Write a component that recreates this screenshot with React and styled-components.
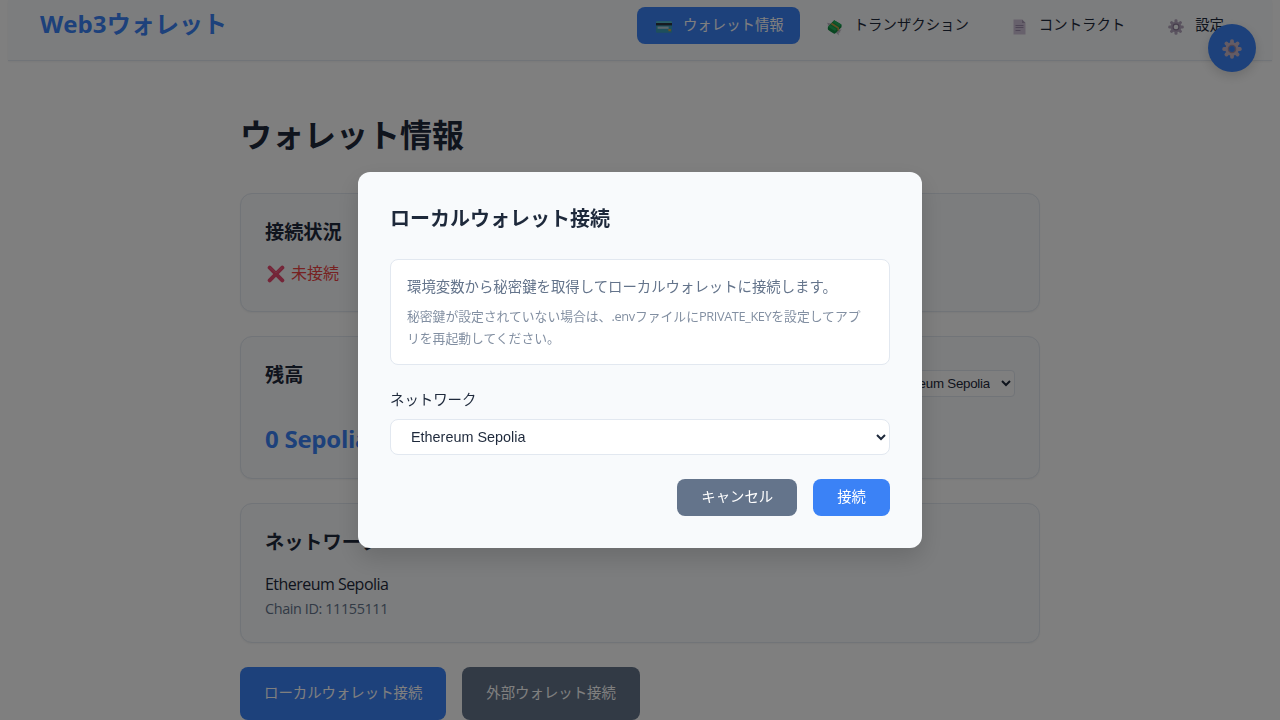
import React from "react";
import styled, { createGlobalStyle } from "styled-components";

const GlobalStyle = createGlobalStyle`
  * { box-sizing: border-box; }
  html, body { margin: 0; height: 720px; overflow: hidden; background: #fff; }
  body {
    font-family: "Open Sans", "Noto Sans CJK JP", sans-serif;
    font-size: 16px;
    color: #1e293b;
  }
  button { font-family: inherit; cursor: pointer; }
`;

const Page = styled.div`
  height: 720px;
  padding: 0 8px;
  overflow: hidden;
`;

const Header = styled.header`
  display: flex;
  justify-content: space-between;
  align-items: flex-start;
  height: 61px;
  padding: 7px 32px 0;
  background: #f8fafc;
  border-bottom: 1px solid #e2e8f0;
  box-shadow: 0 1px 2px rgba(0, 0, 0, 0.05);
`;

const Brand = styled.div`
  font-size: 24px;
  font-weight: 700;
  line-height: 34px;
  letter-spacing: 0.1px;
  color: #3b82f6;
  white-space: nowrap;
`;

const Nav = styled.nav`
  display: flex;
  gap: 8px;
`;

const NavItem = styled.button`
  display: flex;
  align-items: center;
  gap: 8px;
  height: 37px;
  padding: 0 16px;
  border: 0;
  border-radius: 8px;
  background: ${(p) => (p.$active ? "#3b82f6" : "transparent")};
  color: ${(p) => (p.$active ? "#fff" : "#1e293b")};
  font-size: 14.4px;
  line-height: 20px;
  white-space: nowrap;
`;

const NavIcon = styled.span`
  display: flex;
  justify-content: center;
  width: 22px;
  padding-top: 3px;
`;

const NavLabel = styled.span`
  padding-bottom: 1px;
`;

const Main = styled.main`
  width: 800px;
  margin: 0 auto;
  padding-top: 50px;
`;

const PageTitle = styled.h1`
  margin: 0 0 34px;
  font-size: 32px;
  font-weight: 700;
  line-height: 48px;
`;

const Card = styled.section`
  height: ${(p) => p.$height}px;
  margin-bottom: 24px;
  padding: 23px 24px;
  background: #f8fafc;
  border: 1px solid #e2e8f0;
  border-radius: 12px;
  box-shadow: 0 1px 2px rgba(0, 0, 0, 0.05);
`;

const CardTitle = styled.h2`
  margin: 0;
  font-size: 19.2px;
  font-weight: 700;
  line-height: 30px;
`;

const Status = styled.div`
  display: flex;
  align-items: center;
  gap: 4px;
  margin-top: 13px;
  line-height: 26px;
  color: #ef4444;
`;

const StatusIcon = styled.span`
  display: flex;
  justify-content: center;
  width: 22px;
  padding-top: 2px;
`;

const CardHead = styled.div`
  display: flex;
  justify-content: space-between;
  align-items: flex-start;
  height: 61px;
`;

const Select = styled.select`
  display: block;
  background: #fff;
  color: #1e293b;
  border: 1px solid #e2e8f0;
  font-family: "Liberation Sans", Arial, sans-serif;
`;

const SmallSelect = styled(Select)`
  height: 27px;
  margin-top: 10px;
  padding: 4px 8px;
  border-radius: 4px;
  font-size: 13.33px;
  letter-spacing: -0.25px;
`;

const WideSelect = styled(Select)`
  width: 100%;
  height: 36px;
  padding: 8px 0 8px 16px;
  border-radius: 8px;
  font-size: 14.4px;
`;

const Balance = styled.div`
  font-size: 24px;
  font-weight: 700;
  line-height: 36px;
  letter-spacing: -0.25px;
  color: #3b82f6;
`;

const NetworkName = styled.div`
  margin-top: 15px;
  line-height: 24px;
  letter-spacing: -0.53px;
`;

const ChainId = styled.div`
  margin-top: 2px;
  font-size: 14.4px;
  line-height: 22px;
  letter-spacing: -0.38px;
  color: #64748b;
`;

const Actions = styled.div`
  display: flex;
  gap: 16px;
`;

const Button = styled.button`
  height: ${(p) => (p.$large ? 53 : 37)}px;
  padding: 0 24px 1px;
  border: 0;
  border-radius: 8px;
  background: ${(p) => (p.$secondary ? "#64748b" : "#3b82f6")};
  color: #fff;
  font-size: 14.4px;
  line-height: 22px;
  white-space: nowrap;
`;

const SettingsFab = styled.button`
  position: fixed;
  top: 24px;
  right: 24px;
  display: flex;
  align-items: center;
  justify-content: center;
  width: 48px;
  height: 48px;
  padding: 2px 0 0;
  border: 0;
  border-radius: 50%;
  background: #3b82f6;
  box-shadow: 0 4px 12px rgba(0, 0, 0, 0.15);
`;

const Overlay = styled.div`
  position: fixed;
  inset: 0;
  display: flex;
  align-items: center;
  justify-content: center;
  background: rgba(0, 0, 0, 0.5);
`;

const Dialog = styled.div`
  width: 564px;
  height: 376px;
  padding: 32px;
  border-radius: 12px;
  background: #f8fafc;
  box-shadow: 0 10px 25px rgba(0, 0, 0, 0.15);
`;

const DialogTitle = styled.h3`
  margin: 0 0 25px;
  font-size: 20px;
  font-weight: 700;
  line-height: 30px;
`;

const Notice = styled.div`
  height: 106px;
  margin-bottom: 23px;
  padding: 15px 16px;
  border: 1px solid #e2e8f0;
  border-radius: 8px;
  background: #fff;
  color: #64748b;
`;

const NoticeText = styled.p`
  margin: 0 0 6px;
  font-size: 14.4px;
  line-height: 24px;
`;

const NoticeHint = styled.p`
  margin: 0;
  font-size: 12.8px;
  line-height: 22px;
  opacity: 0.8;
`;

const Latin = styled.span`
  letter-spacing: ${(p) => p.$track}px;
`;

const FieldLabel = styled.label`
  display: block;
  margin-bottom: 7px;
  font-size: 14.4px;
  line-height: 24px;
`;

const DialogActions = styled.div`
  display: flex;
  justify-content: flex-end;
  gap: 16px;
  margin-top: 24px;
`;

const CardIcon = () => (
  <svg width="16" height="12" viewBox="0 0 16 12">
    <rect x="0" y="0.3" width="16" height="11.4" rx="1" fill="#3d9fb8" />
    <rect x="0" y="0.3" width="16" height="2" rx="1" fill="#55bccd" />
    <rect x="0" y="2" width="16" height="2.4" fill="#2c3440" />
    <rect x="1.6" y="5.6" width="11" height="2.2" fill="#b5cbd6" />
    <rect x="12.4" y="8" width="2.4" height="2.2" fill="#d9a53b" />
  </svg>
);

const MoneyIcon = () => (
  <svg width="17" height="17" viewBox="0 0 17 17">
    <path d="M0.8 3.8 6.5 4.8 5.5 9 3 8.4 3 6.8 1.6 6.4 2 5.2Z" fill="#bdb7c4" />
    <path d="M10.5 11 15.8 10.6 14.2 12 14.2 13.4 12.6 13.4 12.8 16.4 9.4 13.2Z" fill="#bdb7c4" />
    <path d="M8.2 1.2 15.4 5.5 Q15.8 6 15.5 8.3 L8.9 14.8 Q8 15.2 2 10.8 Q1.5 9 2.1 7.8Z" fill="#138c43" />
    <path d="M8.2 1.2 15.4 5.5 9 12 2.1 7.8Z" fill="#21b15a" />
    <path d="M4.3 5.8 11.2 10.1 M6.4 3.4 13.2 7.7" stroke="#168d45" strokeWidth="0.8" />
    <path d="M5.4 4.5 12.2 8.9V11.5" fill="none" stroke="#c99b42" strokeWidth="1.5" />
  </svg>
);

const DocumentIcon = () => (
  <svg width="13" height="16" viewBox="0 0 13 16">
    <path d="M0.5 0.5H9L12.5 4V15.5H0.5Z" fill="#cfc3d8" />
    <path d="M9 0.5V4H12.5Z" fill="#a99bb5" />
    <path d="M2.5 6.5H10.5M2.5 8.5H10.5M2.5 11.5H7.5" stroke="#9d8cac" />
  </svg>
);

const GearIcon = ({ size = 16, light }) => (
  <svg width={size} height={size} viewBox="0 0 20 20">
    <g fill={light ? "#c8b7c8" : "#b4a6be"}>
      {[0, 45, 90, 135].map((angle) => (
        <rect key={angle} x="8.1" y="0.3" width="3.8" height="19.4" rx="1.7" transform={`rotate(${angle} 10 10)`} />
      ))}
      <circle cx="10" cy="10" r="6.7" />
    </g>
    <circle cx="10" cy="10" r="4.3" fill={light ? "#a18ca5" : "#8c7a98"} />
    <circle cx="10" cy="10" r="2.9" fill={light ? "#3b82f6" : "#f8fafc"} />
  </svg>
);

const CrossIcon = () => (
  <svg width="18" height="18" viewBox="0 0 18 18">
    <path d="M2.7 2.7 15.3 15.3M15.3 2.7 2.7 15.3" stroke="#e84a70" strokeWidth="4" strokeLinecap="round" />
    <path d="M3 2.7 9 8 15 2.7" fill="none" stroke="#f46c8b" strokeWidth="0.8" />
  </svg>
);

const navItems = [
  { label: "ウォレット情報", icon: <CardIcon />, active: true },
  { label: "トランザクション", icon: <MoneyIcon /> },
  { label: "コントラクト", icon: <DocumentIcon /> },
  { label: "設定", icon: <GearIcon /> },
];

export default function App() {
  return (
    <>
      <GlobalStyle />
      <Page>
        <Header>
          <Brand>Web3ウォレット</Brand>
          <Nav>
            {navItems.map((item) => (
              <NavItem key={item.label} $active={item.active}>
                <NavIcon>{item.icon}</NavIcon>
                <NavLabel>{item.label}</NavLabel>
              </NavItem>
            ))}
          </Nav>
        </Header>
        <Main>
          <PageTitle>ウォレット情報</PageTitle>
          <Card $height={119}>
            <CardTitle>接続状況</CardTitle>
            <Status>
              <StatusIcon><CrossIcon /></StatusIcon>
              未接続
            </Status>
          </Card>
          <Card $height={143}>
            <CardHead>
              <CardTitle>残高</CardTitle>
              <SmallSelect defaultValue="sepolia">
                <option value="sepolia">Ethereum Sepolia</option>
              </SmallSelect>
            </CardHead>
            <Balance>0 SepoliaETH</Balance>
          </Card>
          <Card $height={140}>
            <CardTitle>ネットワーク</CardTitle>
            <NetworkName>Ethereum Sepolia</NetworkName>
            <ChainId>Chain ID: 11155111</ChainId>
          </Card>
          <Actions>
            <Button $large>ローカルウォレット接続</Button>
            <Button $large $secondary>外部ウォレット接続</Button>
          </Actions>
        </Main>
      </Page>
      <SettingsFab aria-label="設定"><GearIcon size={20} light /></SettingsFab>
      <Overlay>
        <Dialog role="dialog">
          <DialogTitle>ローカルウォレット接続</DialogTitle>
          <Notice>
            <NoticeText>環境変数から秘密鍵を取得してローカルウォレットに接続します。</NoticeText>
            <NoticeHint>
              秘密鍵が設定されていない場合は、<Latin $track={-0.3}>.env</Latin>ファイルに<Latin $track={-0.4}>PRIVATE_KEY</Latin>を設定してアプリを再起動してください。
            </NoticeHint>
          </Notice>
          <FieldLabel htmlFor="network">ネットワーク</FieldLabel>
          <WideSelect id="network" defaultValue="sepolia">
            <option value="sepolia">Ethereum Sepolia</option>
          </WideSelect>
          <DialogActions>
            <Button $secondary>キャンセル</Button>
            <Button>接続</Button>
          </DialogActions>
        </Dialog>
      </Overlay>
    </>
  );
}
